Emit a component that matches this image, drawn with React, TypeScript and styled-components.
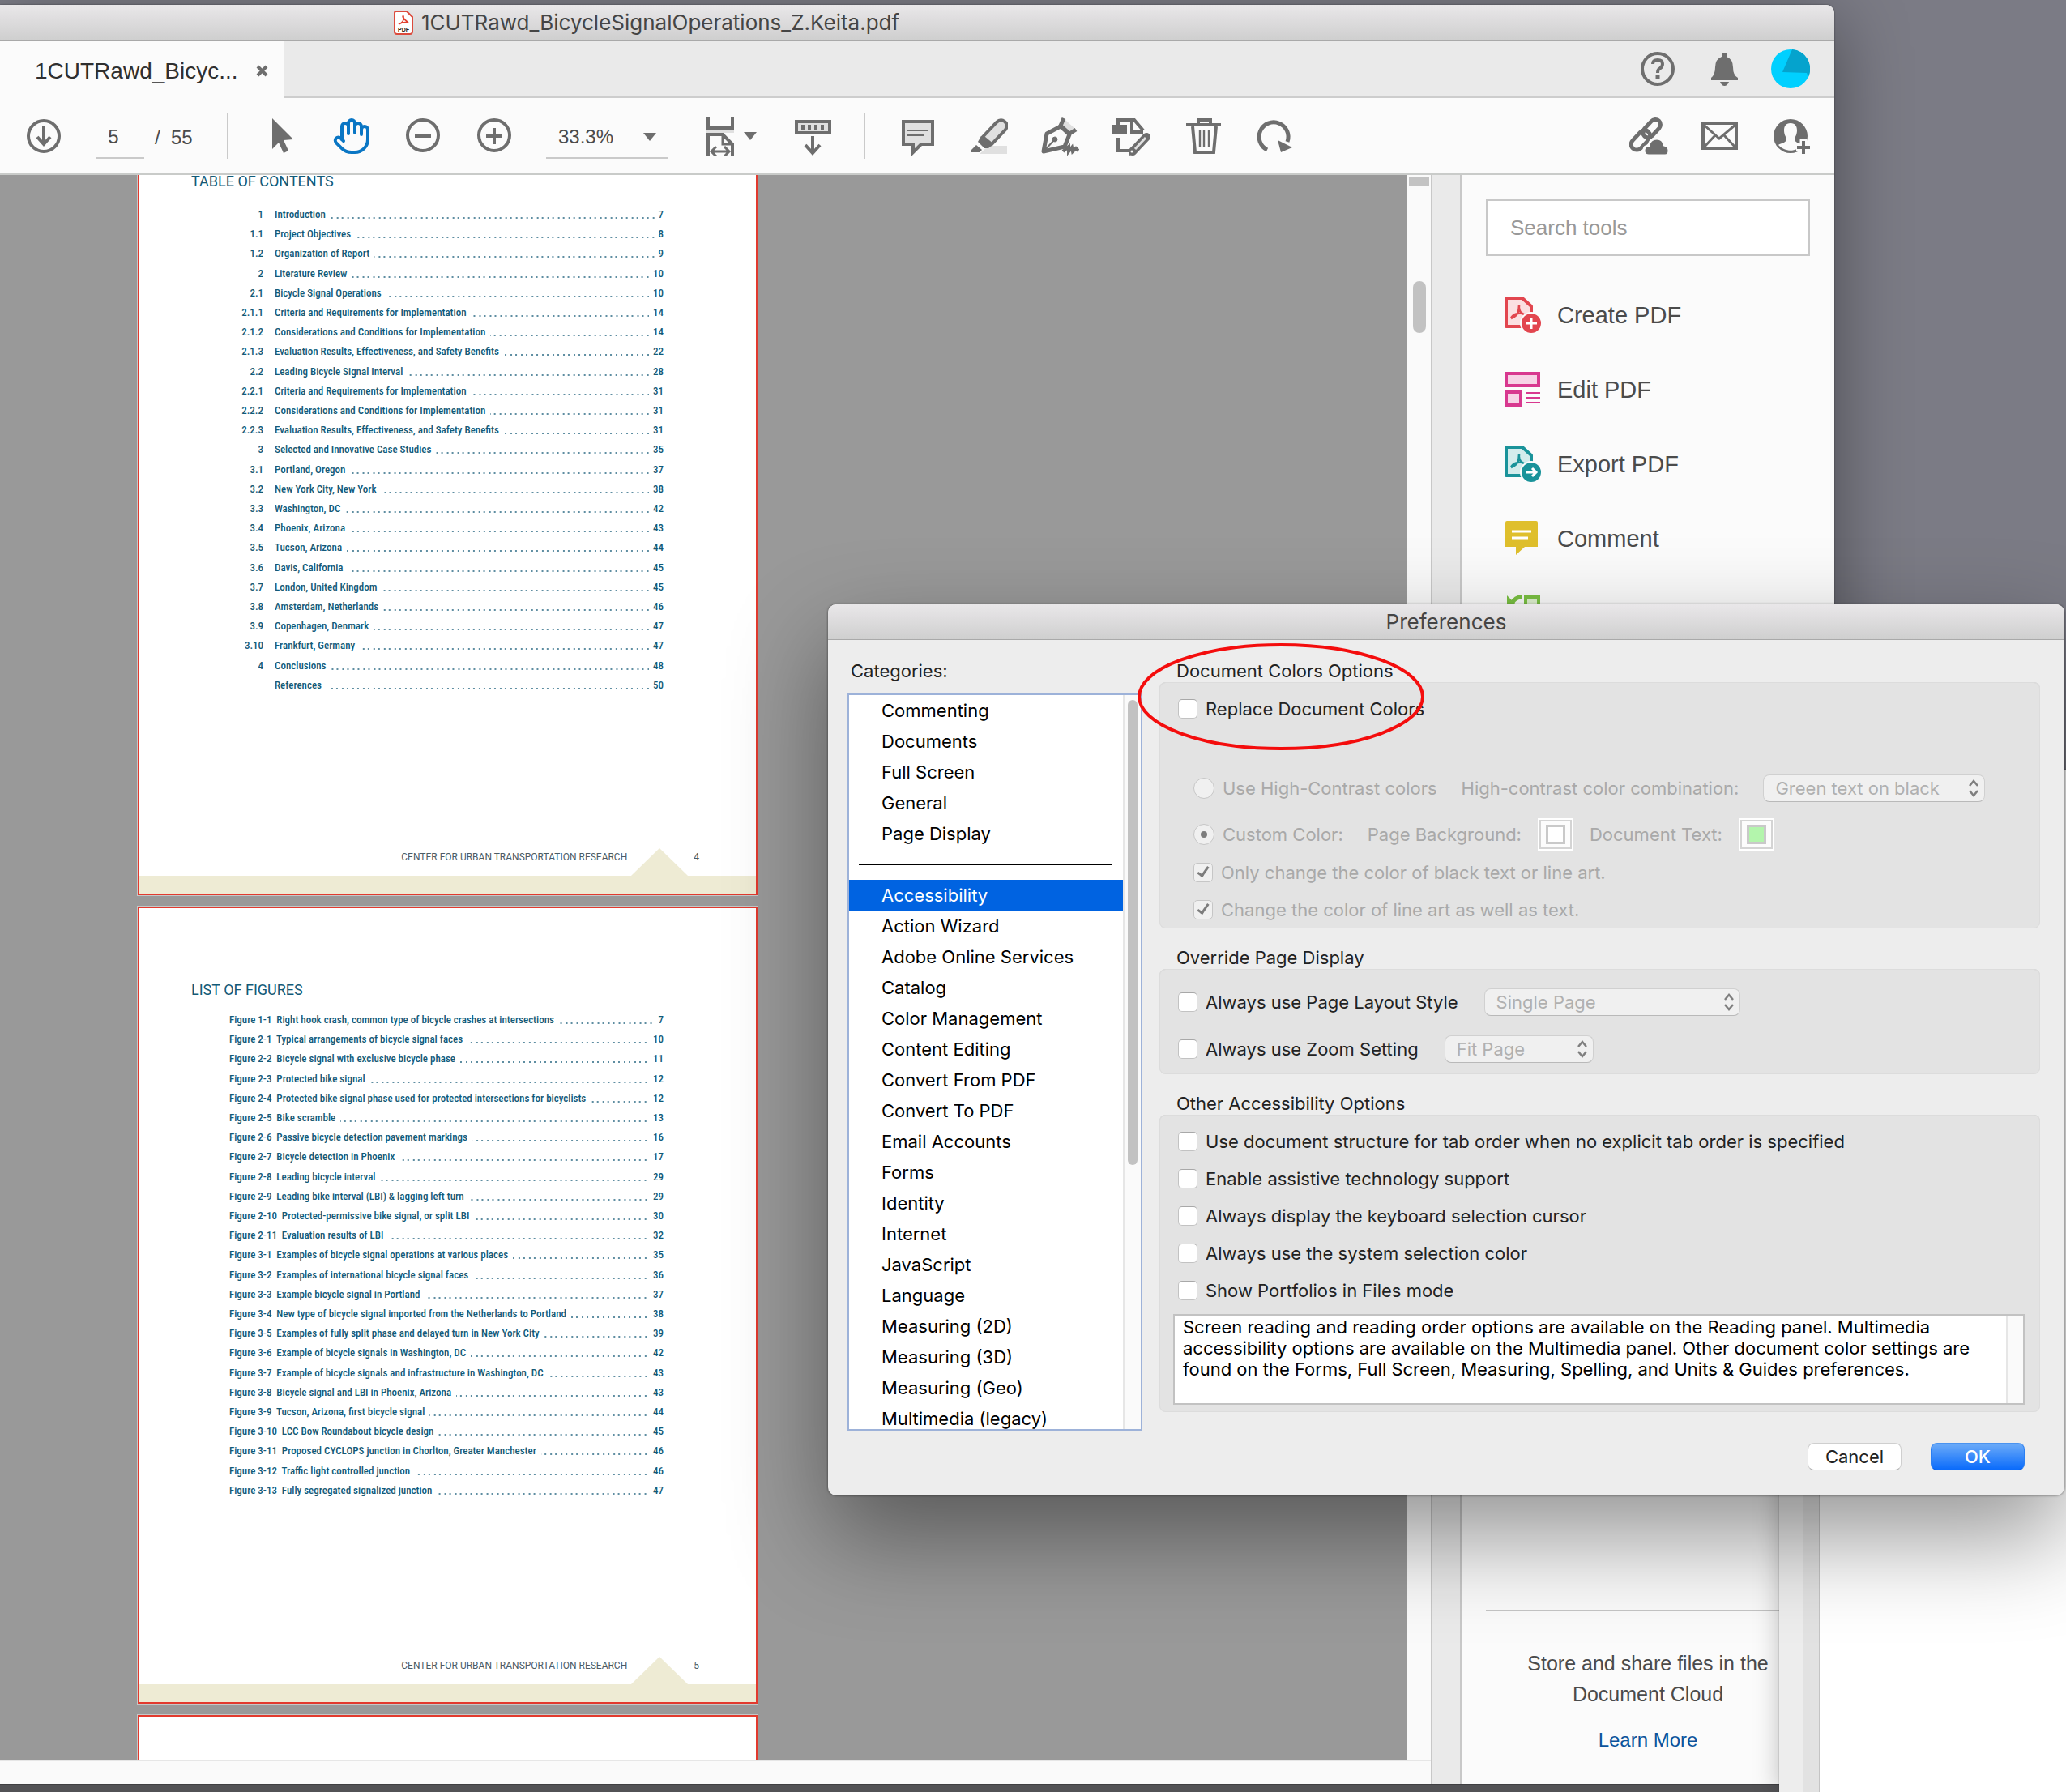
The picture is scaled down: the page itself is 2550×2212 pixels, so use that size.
import React, { useLayoutEffect, useRef } from "react";
import styled, { createGlobalStyle, css } from "styled-components";
import { Hand } from "lucide-react";

const INK = "#6e6e6e";
const PALE = "#e0e0e0";
const UI = `Inter, "Noto Sans", sans-serif`;
const HELV = `"Liberation Sans", Arial, sans-serif`;
const CONDENSED = `"Roboto Condensed", Roboto, sans-serif`;

const GlobalStyle = createGlobalStyle`
  *, *::before, *::after { box-sizing: border-box; }
  html, body { margin: 0; height: 100%; }
  #root { height: 100%; }
  button, input, select, textarea { font: inherit; color: inherit; }
`;

const Desktop = styled.div`
  position: relative;
  height: 100%;
  overflow: hidden;
  background: #7b7b85;
  font-family: ${UI};
`;

const DesktopFloor = styled.div`
  position: absolute;
  inset: auto 0 0 0;
  height: 10px;
  border-top: 1px solid #3f3f42;
  background: #525255;
`;

/* ---------- document window ---------- */

const DocumentWindow = styled.main`
  position: absolute;
  inset: 6px 286px 10px 0;
  display: flex;
  flex-direction: column;
  background: #fbfbfb;
  border-top-right-radius: 10px;
  box-shadow: 0 20px 90px rgba(0, 0, 0, 0.4), 0 0 2px rgba(0, 0, 0, 0.5);
  font-family: ${HELV};
`;

const titleBar = css`
  display: flex;
  align-items: center;
  justify-content: center;
  height: 44px;
  flex: none;
  background: linear-gradient(#e9e7e9, #cfcfcf);
  border-bottom: 1px solid #a9a9a9;
  color: #454545;
  font-family: ${UI};
  font-size: 26px;
  line-height: 32px;
`;

const WindowTitle = styled.header`
  ${titleBar}
  gap: 10px;
  padding-right: 668px;
  border-top-right-radius: 10px;
`;

const TabBar = styled.nav`
  display: flex;
  justify-content: space-between;
  height: 71px;
  flex: none;
  background: #eaeaea;
  border-bottom: 2px solid #cdcdcd;
`;

const Tab = styled.div`
  display: flex;
  align-items: center;
  gap: 22px;
  width: 351px;
  height: 71px;
  padding: 4px 0 0 43px;
  background: #fbfbfb;
  border-right: 1px solid #cdcdcd;
  color: #2f2f2f;
  font-size: 28px;
  line-height: 34px;
`;

const TabActions = styled.div`
  display: flex;
  align-items: center;
  gap: 34px;
  padding-right: 30px;
`;

const PlainButton = styled.button`
  display: flex;
  align-items: center;
  justify-content: center;
  flex: none;
  padding: 0;
  border: 0;
  background: none;
  color: ${INK};
`;

const IconButton = styled(PlainButton)`
  width: 48px;
  height: 48px;
`;

const Toolbar = styled.div`
  display: flex;
  align-items: center;
  gap: 40px;
  height: 95px;
  flex: none;
  padding: 0 29px 0 30px;
  background: #fbfbfb;
  border-bottom: 2px solid #c9cbc9;
  color: #4b4b4b;
  font-size: 24px;
`;

const PageGroup = styled.div`
  display: flex;
  align-items: center;
  gap: 13px;
  width: 122px;
  white-space: nowrap;
`;

const PageInput = styled.input`
  width: 60px;
  height: 56px;
  padding: 4px 16px 0 0;
  border: 0;
  border-bottom: 2px solid #cacaca;
  background: none;
  text-align: center;
`;

const PageTotal = styled.span`
  padding-top: 4px;
  white-space: pre;
`;

const Divider = styled.span`
  width: 2px;
  height: 56px;
  flex: none;
  background: #cacaca;
`;

const ZoomField = styled.div`
  position: relative;
  width: 150px;
  flex: none;
  & > svg {
    position: absolute;
    right: 14px;
    top: 24px;
    pointer-events: none;
  }
`;

const ZoomSelect = styled.select`
  appearance: none;
  width: 100%;
  height: 56px;
  padding: 4px 0 0 15px;
  border: 0;
  border-bottom: 2px solid #cacaca;
  border-radius: 0;
  background: none;
`;

const FitButton = styled(PlainButton)`
  gap: 6px;
  width: 74px;
  height: 48px;
  justify-content: flex-start;
`;

const ShareActions = styled.div`
  display: flex;
  gap: 40px;
  margin-left: auto;
`;

const Workspace = styled.div`
  display: flex;
  flex: 1;
  min-height: 0;
`;

const DocumentPane = styled.section`
  display: flex;
  flex-direction: column;
  flex: 1;
  min-width: 0;
`;

const ViewRow = styled.div`
  display: flex;
  flex: 1;
  min-height: 0;
`;

const Viewport = styled.div`
  display: flex;
  flex-direction: column;
  gap: 14px;
  flex: 1;
  padding-left: 170px;
  overflow: hidden;
  background: #999999;
`;

const ScrollTrack = styled.div`
  width: 30px;
  padding: 2px;
  border-left: 1px solid #e0e0e0;
  background: #fafafa;
`;

const ScrollCap = styled.div`
  height: 12px;
  background: #c3c3c3;
`;

const ScrollThumb = styled.div`
  width: 16px;
  height: 64px;
  margin: 117px 0 0 5px;
  border-radius: 8px;
  background: #c2c2c2;
`;

const StatusBar = styled.div`
  height: 30px;
  flex: none;
  border-top: 2px solid #e6e6e6;
  background: #fafafa;
`;

const Splitter = styled.div`
  width: 38px;
  flex: none;
  background: #eaeaea;
  border: solid #c8c8c8;
  border-width: 0 2px;
`;

/* ---------- PDF pages ---------- */

const Sheet = styled.article`
  position: relative;
  display: flex;
  flex-direction: column;
  width: 765px;
  height: 984px;
  flex: none;
  padding: 93px 114px 0 64px;
  background: #fff;
  border: 2px solid #e23a2e;
  outline: 1px solid #c4c8c8;
  font-family: ${CONDENSED};
  color: #125a78;
`;

const SheetTitle = styled.h2`
  margin: 0;
  font: 400 18px/16px Roboto, sans-serif;
`;

const Contents = styled.ol<{ $inset: number; $lead: number }>`
  display: flex;
  flex-direction: column;
  justify-content: space-between;
  height: 605px;
  margin: ${(p) => p.$lead}px 0 0;
  padding: 0 0 0 ${(p) => p.$inset}px;
  list-style: none;
  font-size: 13px;
  font-weight: 500;
  line-height: 24px;
`;

const Entry = styled.li`
  display: flex;
  white-space: pre;
`;

const EntryNumber = styled.span`
  width: 48px;
  margin-right: 14px;
  text-align: right;
`;

/* Two dots per 13px tile, counted from the right so that rows line up. */
const Leader = styled.span<{ $gap: number }>`
  flex: 1;
  height: 2px;
  margin: 15px ${(p) => p.$gap}px 0 6px;
  background-image: linear-gradient(90deg, transparent 4px, #5f8ea2 4px 6px, transparent 6px 11px, #5f8ea2 11px);
  background-size: 13px 2px;
  background-position: right top;
`;

const SheetFooter = styled.footer`
  position: absolute;
  inset: auto 0 0 0;
  color: #4b5c66;
  font: 400 12px/20px Roboto, sans-serif;
`;

const FooterLine = styled.div`
  display: flex;
  align-items: flex-end;
  justify-content: flex-end;
  padding-right: 70px;
  & > svg { margin: 0 7px 0 5px; display: block; }
  & > span { margin-bottom: 13px; }
`;

const FooterBand = styled.div`
  height: 22px;
  background: #eeebd4;
`;

/* ---------- tools panel ---------- */

const ToolsPanel = styled.aside`
  display: flex;
  flex-direction: column;
  width: 460px;
  flex: none;
  padding: 30px 30px 35px;
  background: #fbfbfb;
  color: #4b4b4b;
`;

const SearchInput = styled.input`
  width: 100%;
  height: 70px;
  flex: none;
  padding: 0 28px;
  border: 2px solid #c8c8c8;
  background: #fff;
  font-size: 26px;
  &::placeholder { color: #999; opacity: 1; }
`;

const ToolList = styled.div`
  display: flex;
  flex-direction: column;
  padding: 27px 0 0 22px;
`;

const ToolButton = styled(PlainButton)`
  justify-content: flex-start;
  gap: 18px;
  height: 92px;
  color: #4b4b4b;
  font-size: 29px;
`;

const CloudPromo = styled.div`
  margin-top: auto;
  padding-top: 45px;
  border-top: 2px solid #c6c6c6;
  text-align: center;
  font-size: 25px;
  line-height: 38px;
  & > p { margin: 0 40px 18px; }
`;

const LearnMore = styled.a`
  color: #0b539b;
  font-size: 24px;
  text-decoration: none;
`;

/* ---------- window peeking out from behind the dialog ---------- */

const BackWindow = styled.div`
  position: absolute;
  inset: 950px 0 0 auto;
  width: 354px;
  display: flex;
  background: #fff;
  box-shadow: 0 0 30px rgba(0, 0, 0, 0.25), 0 0 1px rgba(0, 0, 0, 0.5);
`;

const BackWindowEdge = styled.div`
  width: 50px;
  border-right: 1px solid #c4c4c4;
  background: linear-gradient(90deg, #ededed 30px, #e2e2e2 30px);
`;

/* ---------- preferences dialog ---------- */

const Dialog = styled.section`
  position: absolute;
  top: 746px;
  right: 2px;
  width: 1526px;
  background: #ededed;
  border-radius: 10px;
  box-shadow: 0 50px 120px rgba(0, 0, 0, 0.42), 0 0 3px rgba(0, 0, 0, 0.55);
  color: #222;
  font-size: 22px;
  line-height: 28px;
`;

const DialogTitle = styled.header`
  ${titleBar}
  border-radius: 10px 10px 0 0;
`;

const DialogBody = styled.div`
  display: flex;
  gap: 21px;
  padding: 24px 30px 0 24px;
`;

const CategoryColumn = styled.div`
  width: 364px;
  flex: none;
`;

const ColumnLabel = styled.div`
  padding-left: 4px;
  margin-bottom: 14px;
`;

const ListBox = styled.div`
  display: flex;
  height: 910px;
  border: 2px solid #9db2d9;
  background: #fff;
  color: #000;
  overflow: hidden;
`;

const CategoryList = styled.ul`
  flex: 1;
  margin: 0;
  padding: 0;
  list-style: none;
`;

const Category = styled.li<{ $selected?: boolean }>`
  height: 38px;
  padding-left: 40px;
  line-height: 38px;
  ${(p) =>
    p.$selected &&
    css`
      background: #0063e1;
      color: #fff;
    `}
`;

const CategoryRule = styled.li`
  height: 38px;
  padding: 18px 14px 0 12px;
  &::after {
    content: "";
    display: block;
    height: 2px;
    background: #000;
  }
`;

const ListTrack = styled.div`
  width: 22px;
  padding: 6px 0 0 4px;
  border-left: 2px solid #e6e6e6;
  background: #fafafa;
  &::after {
    content: "";
    display: block;
    width: 12px;
    height: 574px;
    border-radius: 6px;
    background: #c2c2c2;
  }
`;

const Options = styled.div`
  display: flex;
  flex-direction: column;
  gap: 22px;
  flex: 1;
`;

const Group = styled.fieldset`
  min-width: 0;
  margin: 0;
  padding: 0;
  border: 0;
  & > legend { padding: 0 0 0 21px; }
`;

const GroupBox = styled.div<{ $top?: number; $bottom?: number }>`
  padding: ${(p) => p.$top ?? 0}px 19px ${(p) => p.$bottom ?? 0}px 0;
  border-radius: 8px;
  background: #e3e3e3;
  box-shadow: inset 0 0 0 1px #dcdcdc, inset 0 1px 0 #d2d2d2;
`;

const Row = styled.div<{ $h: number; $indent?: boolean; $after?: number }>`
  display: flex;
  align-items: center;
  height: ${(p) => p.$h}px;
  margin-bottom: ${(p) => p.$after ?? 0}px;
  padding-left: ${(p) => (p.$indent ? 42 : 23)}px;
  white-space: nowrap;
`;

const Dimmed = styled.span<{ $before: number; $after: number }>`
  margin: 0 ${(p) => p.$after}px 0 ${(p) => p.$before}px;
  color: #a9a9a9;
`;

const ControlLabel = styled.label`
  display: flex;
  align-items: center;
  gap: 10px;
  &:has(input:disabled) { color: #a9a9a9; }
`;

const Check = styled.input`
  appearance: none;
  width: 24px;
  height: 24px;
  flex: none;
  margin: 0;
  border: 1px solid #c2c2c2;
  border-top-color: #a8a8a8;
  border-radius: 5px;
  background: #fff;
  &:disabled { background: #f0f0f0; border-color: #c6c6c6; }
  &:checked::after {
    content: "";
    display: block;
    width: 8px;
    height: 15px;
    margin: 1px 0 0 7px;
    border: solid #7d7d7d;
    border-width: 0 3px 3px 0;
    transform: rotate(35deg);
  }
`;

const Radio = styled.input`
  appearance: none;
  display: grid;
  place-items: center;
  width: 26px;
  height: 26px;
  flex: none;
  margin: 0;
  border: 1px solid #c6c6c6;
  border-radius: 50%;
  background: #f0f0f0;
  &:checked::after {
    content: "";
    width: 8px;
    height: 8px;
    border-radius: 50%;
    background: #7d7d7d;
  }
`;

const PopupFrame = styled.div<{ $w: number; $lead?: number }>`
  position: relative;
  width: ${(p) => p.$w}px;
  margin-left: ${(p) => p.$lead ?? 0}px;
  & > svg {
    position: absolute;
    right: 6px;
    top: 6px;
    pointer-events: none;
  }
`;

const PopupSelect = styled.select`
  appearance: none;
  display: block;
  width: 100%;
  height: 34px;
  padding: 0 14px;
  border: 1px solid #d0d0d0;
  border-bottom-color: #b9b9b9;
  border-radius: 8px;
  background: #f0f0f0;
  color: #b0b0b0;
  opacity: 1;
`;

const Swatch = styled.button<{ $color: string }>`
  display: grid;
  place-items: center;
  width: 44px;
  height: 40px;
  padding: 0;
  border: 2px solid #fff;
  background: #f7f7f7;
  box-shadow: inset 0 0 0 2px #d4d4d4, inset 0 0 0 8px #fcfcfc;
  &::after {
    content: "";
    width: 24px;
    height: 24px;
    border: 3px solid #c9c9c9;
    background: ${(p) => p.$color};
  }
`;

const Note = styled.div`
  display: flex;
  height: 112px;
  margin: 6px 0 0 17px;
  border: 2px solid #c2c2c2;
  background: #fff;
`;

const NoteText = styled.textarea`
  flex: 1;
  padding: 1px 10px 0;
  border: 0;
  background: none;
  resize: none;
  overflow: hidden;
  outline: 0;
  color: #000;
  line-height: 26px;
`;

const NoteTrack = styled.div`
  width: 21px;
  border-left: 2px solid #e6e6e6;
  background: #fafafa;
`;

const DialogFooter = styled.footer`
  display: flex;
  justify-content: flex-end;
  gap: 36px;
  padding: 15px 49px 31px;
`;

const DialogButton = styled.button<{ $primary?: boolean }>`
  width: 116px;
  height: 34px;
  padding: 0;
  border: 1px solid #cfcfcf;
  border-bottom-color: #b0b0b0;
  border-radius: 8px;
  background: #fff;
  ${(p) =>
    p.$primary &&
    css`
      border-color: #4a93f0 #2a7ff2 #0a5fe0;
      background: linear-gradient(#6cabf8, #0a6bfb);
      color: #fff;
      font-weight: 500;
    `}
`;

const Annotation = styled.svg`
  position: absolute;
  top: 48px;
  left: 382px;
  pointer-events: none;
`;

/* ---------- icons ---------- */

const Glyph = ({ children, size = 48 }: { children: React.ReactNode; size?: number }) => (
  <svg
    width={size}
    height={size}
    viewBox="0 0 48 48"
    fill="none"
    stroke="currentColor"
    strokeWidth="4"
    aria-hidden="true"
  >
    {children}
  </svg>
);

const Caret = () => (
  <svg width="16" height="10" viewBox="0 0 16 10" fill={INK} aria-hidden="true">
    <path d="M0 0h16L8 10z" />
  </svg>
);

const UpDown = () => (
  <svg width="16" height="22" viewBox="0 0 16 22" fill="none" stroke="#7f7f7f" strokeWidth="2.5" aria-hidden="true">
    <path d="M3 8l5-6 5 6M3 14l5 6 5-6" />
  </svg>
);

const PdfFileIcon = () => (
  <svg width="24" height="30" viewBox="0 0 24 30" aria-hidden="true">
    <path d="M3 1h13l7 7v18a3 3 0 0 1-3 3H4a3 3 0 0 1-3-3V3a2 2 0 0 1 2-2z" fill="#fff" stroke="#dc4a3c" strokeWidth="2" />
    <path d="M6 17c5-2 7-6 6-10-2-1-1 3 6 8-5-1-9 0-12 2z" fill="none" stroke="#e2402f" strokeWidth="1.6" />
    <text x="12" y="26" textAnchor="middle" fontFamily="Liberation Sans, sans-serif" fontWeight="700" fontSize="7" fill="#222">
      PDF
    </text>
  </svg>
);

const DownloadIcon = () => (
  <Glyph>
    <circle cx="24" cy="24" r="19" />
    <path d="M24 12v22M16 25l8 9 8-9" />
  </Glyph>
);

const CursorIcon = () => (
  <Glyph>
    <path d="M14 2l26 26-12 1 6 13-6 3-6-13-8 8z" fill="currentColor" stroke="none" />
  </Glyph>
);

const ZoomIcon = ({ plus }: { plus?: boolean }) => (
  <Glyph>
    <circle cx="24" cy="23" r="19" />
    <path d={plus ? "M14 24h20M24 14v20" : "M14 24h20"} />
  </Glyph>
);

const FitIcon = () => (
  <Glyph>
    <path d="M10 0v14h30V0" />
    <path d="M8 18h34" stroke={PALE} />
    <path d="M10 48V22h18l12 12v14" />
    <path d="M28 22v12h12" strokeWidth="3" />
    <path d="M15 43h20M20 37l-6 6 6 6M30 37l6 6-6 6" strokeWidth="3" />
  </Glyph>
);

const KeyboardIcon = () => (
  <Glyph>
    <rect x="5" y="6" width="41" height="14" fill={PALE} />
    <path d="M11 13h30" strokeDasharray="4 4" strokeWidth="6" />
    <path d="M25 24v20M16 35l9 10 9-10" />
  </Glyph>
);

const CommentIcon = () => (
  <Glyph>
    <path d="M7 6h36v28H29L19 44V34H7z" fill={PALE} />
    <path d="M12 17h25M12 23h21" strokeWidth="2" />
  </Glyph>
);

const HighlightIcon = () => (
  <Glyph>
    <path d="M13 46l11-10h23v10z" fill={PALE} stroke="none" />
    <path d="M17 25L34 7q5-5 10-1t1 10L28 34z" fill={PALE} />
    <path d="M15 24l14 11-5 4h-5l-8-8z" fill="currentColor" stroke="none" />
    <path d="M9 35l7 6-3 3H2v-2z" fill="currentColor" stroke="none" />
  </Glyph>
);

const SignIcon = () => (
  <Glyph>
    <path d="M31 4l12 11-7 6-11-10z" fill={PALE} stroke="none" />
    <path d="M29 2l-4 9 11 10 8-5" strokeWidth="5" />
    <path d="M4 43l4-22 17-9 11 10-6 15z" strokeWidth="5" strokeLinejoin="round" />
    <path d="M5 42l12-13" strokeWidth="2" />
    <circle cx="18" cy="28" r="3" fill="currentColor" strokeWidth="1" />
    <path d="M28 43l7-6v6l4-5 1 5 4-4 3 3" strokeWidth="4" />
  </Glyph>
);

const EditPageIcon = () => (
  <Glyph>
    <path d="M1 10h18v12H1z" fill="currentColor" stroke="none" />
    <path d="M8 10V4h20l11 13M25 4v15h14M8 26v16h14" strokeWidth="4" />
    <path d="M26 43L43 25" strokeWidth="10" strokeLinecap="round" />
    <path d="M22 48l1-10 8 7z" fill="currentColor" stroke="none" />
    <path d="M29 40L42 26" stroke={PALE} strokeWidth="3" />
    <circle cx="25" cy="43" r="1.5" fill="#fbfbfb" stroke="none" />
  </Glyph>
);

const TrashIcon = () => (
  <Glyph>
    <path d="M4 10h43M19 9V4h15v5" />
    <path d="M12 12l3 32h23l3-32" />
    <path d="M21 17v20M26 17v20M32 17v20" strokeWidth="2.4" />
  </Glyph>
);

const RotateIcon = () => (
  <Glyph>
    <path d="M16 41A18 18 0 1 1 41 31" strokeWidth="5" />
    <path d="M29 29l18 9-14 6z" fill="currentColor" stroke="none" />
  </Glyph>
);

const LinkCloudIcon = () => (
  <Glyph>
    <rect x="15" y="8" width="26" height="13" rx="7" transform="rotate(-47 28 15)" strokeWidth="5" />
    <rect x="0" y="22" width="28" height="14" rx="7" transform="rotate(-47 14 29)" strokeWidth="5" />
    <path
      d="M24 48q-6 0-6-6t6-6q1-9 10-9 8 0 9 8 6 1 6 7t-5 6z"
      fill="currentColor"
      stroke="#fbfbfb"
      strokeWidth="3"
    />
  </Glyph>
);

const MailIcon = () => (
  <Glyph>
    <rect x="3" y="8" width="41" height="31" />
    <path d="M4 10l19 17L43 10M4 38l14-15M43 38L29 23" strokeWidth="3" />
  </Glyph>
);

const AddUserIcon = () => (
  <Glyph>
    <circle cx="23" cy="24" r="21" fill="currentColor" stroke="none" />
    <path
      d="M23 8c6 0 8 4 8 9 0 6-3 8-3 12 2 4 8 4 10 6-8 9-22 9-30 0 2-2 8-2 10-6 0-4-3-6-3-12 0-5 2-9 8-9z"
      fill="#fbfbfb"
      stroke="none"
    />
    <path d="M39 28v20M30 38h18" stroke="#fbfbfb" strokeWidth="9" />
    <path d="M39 30v16M31 38h16" />
  </Glyph>
);

const HelpIcon = () => (
  <Glyph>
    <circle cx="24" cy="24" r="19" />
    <path d="M18 18q0-5 6-5t6 5q0 4-4 6-2 1-2 5" />
    <path d="M24 32v5" strokeWidth="5" />
  </Glyph>
);

const BellIcon = () => (
  <Glyph>
    <path
      d="M21 5h6v4q8 3 8 13 0 10 6 13v3H8v-3q5-4 5-13 0-10 8-13zM19 40h11q-2 5-5.5 5T19 40z"
      fill="currentColor"
      stroke="none"
    />
  </Glyph>
);

const AvatarIcon = () => (
  <Glyph>
    <circle cx="24" cy="24" r="24" fill="#00d0ff" stroke="none" />
    <path d="M26 0a24 24 0 0 1 20 34l-2-5-30-1z" fill="#05a3cd" stroke="none" />
  </Glyph>
);

const AcrobatPage = ({ tint, fill, mark }: { tint: string; fill: string; mark: string }) => (
  <Glyph>
    <g stroke={tint}>
      <path d="M3 3h20l11 10v25H3z" fill={fill} strokeLinejoin="round" />
      <path d="M9 28c8-3 10-8 10-16M9 28c2-5 8-7 15-6M19 15c0 4 3 7 6 8" strokeWidth="2.6" />
    </g>
    <circle cx="34" cy="34" r="13" fill={tint} stroke="#fbfbfb" strokeWidth="2" />
    <path d={mark} stroke="#fff" strokeWidth="3" />
  </Glyph>
);

const EditPdfIcon = () => (
  <Glyph>
    <g stroke="#d8388f">
      <path d="M3 4h40v15H3zM3 27h18v16H3z" fill="#f7d3e6" />
      <path d="M28 28h17M28 34h17M28 40h17" strokeWidth="2" />
    </g>
  </Glyph>
);

const CommentToolIcon = () => (
  <Glyph>
    <path d="M4 2h36q2 0 2 2v30H26L15 44V34H2V4q0-2 2-2z" fill="#dfbf2c" stroke="none" />
    <path d="M10 15h24M10 23h20" stroke="#fff" strokeWidth="3" />
  </Glyph>
);

const OrganizeIcon = () => (
  <Glyph>
    <g stroke="#7bc143">
      <path d="M27 4h16v14H27zM26 26h17v16H26zM5 26h14v16H5z" fill="#dff1cf" />
      <path d="M22 4q-8 0-12 8" strokeWidth="5" />
      <path d="M4 2v14h14z" fill="#7bc143" stroke="none" />
    </g>
  </Glyph>
);

/* ---------- data ---------- */

const tocEntries: [string, string, string][] = [
  ["1", "Introduction", "7"],
  ["1.1", "Project Objectives", "8"],
  ["1.2", "Organization of Report", "9"],
  ["2", "Literature Review", "10"],
  ["2.1", "Bicycle Signal Operations", "10"],
  ["2.1.1", "Criteria and Requirements for Implementation", "14"],
  ["2.1.2", "Considerations and Conditions for Implementation", "14"],
  ["2.1.3", "Evaluation Results, Effectiveness, and Safety Benefits", "22"],
  ["2.2", "Leading Bicycle Signal Interval", "28"],
  ["2.2.1", "Criteria and Requirements for Implementation", "31"],
  ["2.2.2", "Considerations and Conditions for Implementation", "31"],
  ["2.2.3", "Evaluation Results, Effectiveness, and Safety Benefits", "31"],
  ["3", "Selected and Innovative Case Studies", "35"],
  ["3.1", "Portland, Oregon", "37"],
  ["3.2", "New York City, New York", "38"],
  ["3.3", "Washington, DC", "42"],
  ["3.4", "Phoenix, Arizona", "43"],
  ["3.5", "Tucson, Arizona", "44"],
  ["3.6", "Davis, California", "45"],
  ["3.7", "London, United Kingdom", "45"],
  ["3.8", "Amsterdam, Netherlands", "46"],
  ["3.9", "Copenhagen, Denmark", "47"],
  ["3.10", "Frankfurt, Germany", "47"],
  ["4", "Conclusions", "48"],
  ["", "References", "50"],
];

const figureEntries: [string, string, string][] = [
  ["1-1", "Right hook crash, common type of bicycle crashes at intersections", "7"],
  ["2-1", "Typical arrangements of bicycle signal faces", "10"],
  ["2-2", "Bicycle signal with exclusive bicycle phase", "11"],
  ["2-3", "Protected bike signal", "12"],
  ["2-4", "Protected bike signal phase used for protected intersections for bicyclists", "12"],
  ["2-5", "Bike scramble", "13"],
  ["2-6", "Passive bicycle detection pavement markings", "16"],
  ["2-7", "Bicycle detection in Phoenix", "17"],
  ["2-8", "Leading bicycle interval", "29"],
  ["2-9", "Leading bike interval (LBI) & lagging left turn", "29"],
  ["2-10", "Protected-permissive bike signal, or split LBI", "30"],
  ["2-11", "Evaluation results of LBI", "32"],
  ["3-1", "Examples of bicycle signal operations at various places", "35"],
  ["3-2", "Examples of international bicycle signal faces", "36"],
  ["3-3", "Example bicycle signal in Portland", "37"],
  ["3-4", "New type of bicycle signal imported from the Netherlands to Portland", "38"],
  ["3-5", "Examples of fully split phase and delayed turn in New York City", "39"],
  ["3-6", "Example of bicycle signals in Washington, DC", "42"],
  ["3-7", "Example of bicycle signals and infrastructure in Washington, DC", "43"],
  ["3-8", "Bicycle signal and LBI in Phoenix, Arizona", "43"],
  ["3-9", "Tucson, Arizona, first bicycle signal", "44"],
  ["3-10", "LCC Bow Roundabout bicycle design", "45"],
  ["3-11", "Proposed CYCLOPS junction in Chorlton, Greater Manchester", "46"],
  ["3-12", "Traffic light controlled junction", "46"],
  ["3-13", "Fully segregated signalized junction", "47"],
];

const generalCategories = ["Commenting", "Documents", "Full Screen", "General", "Page Display"];

const categories = [
  "Accessibility",
  "Action Wizard",
  "Adobe Online Services",
  "Catalog",
  "Color Management",
  "Content Editing",
  "Convert From PDF",
  "Convert To PDF",
  "Email Accounts",
  "Forms",
  "Identity",
  "Internet",
  "JavaScript",
  "Language",
  "Measuring (2D)",
  "Measuring (3D)",
  "Measuring (Geo)",
  "Multimedia (legacy)",
];

const accessibilityOptions = [
  "Use document structure for tab order when no explicit tab order is specified",
  "Enable assistive technology support",
  "Always display the keyboard selection cursor",
  "Always use the system selection color",
  "Show Portfolios in Files mode",
];

const tools = [
  {
    name: "Create PDF",
    icon: <AcrobatPage tint="#e2464f" fill="#fbdfe1" mark="M34 27v14M27 34h14" />,
  },
  { name: "Edit PDF", icon: <EditPdfIcon /> },
  {
    name: "Export PDF",
    icon: <AcrobatPage tint="#1a939a" fill="#d3ecec" mark="M27 34h12M35 29l5 5-5 5" />,
  },
  { name: "Comment", icon: <CommentToolIcon /> },
  { name: "Organize Pages", icon: <OrganizeIcon /> },
];

const reviewTools = [
  { name: "Add comment", icon: <CommentIcon /> },
  { name: "Highlight text", icon: <HighlightIcon /> },
  { name: "Sign", icon: <SignIcon /> },
  { name: "Edit page", icon: <EditPageIcon /> },
  { name: "Delete", icon: <TrashIcon /> },
  { name: "Rotate", icon: <RotateIcon /> },
];

/* ---------- parts ---------- */

const PageFooter = ({ page }: { page: number }) => (
  <SheetFooter>
    <FooterLine>
      <span>CENTER FOR URBAN TRANSPORTATION RESEARCH</span>
      <svg width="70" height="34" viewBox="0 0 70 34" aria-hidden="true">
        <path d="M35 0l35 34H0z" fill="#eeebd4" />
      </svg>
      <span>{page}</span>
    </FooterLine>
    <FooterBand />
  </SheetFooter>
);

const CheckRow = ({ label, h, indent, checked, disabled, after, children }: {
  label: string;
  h: number;
  indent?: boolean;
  checked?: boolean;
  disabled?: boolean;
  after?: number;
  children?: React.ReactNode;
}) => (
  <Row $h={h} $indent={indent} $after={after}>
    <ControlLabel>
      <Check type="checkbox" defaultChecked={checked} disabled={disabled} />
      {label}
    </ControlLabel>
    {children}
  </Row>
);

const Popup = ({ label, value, width, lead }: { label: string; value: string; width: number; lead?: number }) => (
  <PopupFrame $w={width} $lead={lead}>
    <PopupSelect aria-label={label} disabled defaultValue={value}>
      <option>{value}</option>
    </PopupSelect>
    <UpDown />
  </PopupFrame>
);

const Pages = () => {
  const view = useRef<HTMLDivElement>(null);
  useLayoutEffect(() => {
    if (view.current) view.current.scrollTop = 95;
  }, []);
  return (
    <Viewport ref={view}>
      <Sheet>
        <SheetTitle>TABLE OF CONTENTS</SheetTitle>
        <Contents $inset={41} $lead={21}>
          {tocEntries.map(([num, title, page]) => (
            <Entry key={num + title}>
              <EntryNumber>{num}</EntryNumber>
              <span>{title}</span>
              <Leader $gap={5} />
              <span>{page}</span>
            </Entry>
          ))}
        </Contents>
        <PageFooter page={4} />
      </Sheet>
      <Sheet>
        <SheetTitle>LIST OF FIGURES</SheetTitle>
        <Contents $inset={47} $lead={17}>
          {figureEntries.map(([num, title, page]) => (
            <Entry key={num}>
              <span>{`Figure ${num}  ${title}`}</span>
              <Leader $gap={8} />
              <span>{page}</span>
            </Entry>
          ))}
        </Contents>
        <PageFooter page={5} />
      </Sheet>
      <Sheet />
    </Viewport>
  );
};

const MainWindow = () => (
  <DocumentWindow>
    <WindowTitle>
      <PdfFileIcon />
      1CUTRawd_BicycleSignalOperations_Z.Keita.pdf
    </WindowTitle>
    <TabBar>
      <Tab>
        1CUTRawd_Bicyc...
        <PlainButton aria-label="Close tab">
          <svg width="15" height="15" viewBox="0 0 15 15" stroke={INK} strokeWidth="4" aria-hidden="true">
            <path d="M2 2l11 11M13 2L2 13" />
          </svg>
        </PlainButton>
      </Tab>
      <TabActions>
        <IconButton aria-label="Help"><HelpIcon /></IconButton>
        <IconButton aria-label="Notifications"><BellIcon /></IconButton>
        <IconButton aria-label="Account"><AvatarIcon /></IconButton>
      </TabActions>
    </TabBar>
    <Toolbar>
      <IconButton aria-label="Next page"><DownloadIcon /></IconButton>
      <PageGroup>
        <PageInput aria-label="Page number" defaultValue="5" />
        <PageTotal>/  55</PageTotal>
      </PageGroup>
      <Divider />
      <IconButton aria-label="Select"><CursorIcon /></IconButton>
      <IconButton aria-label="Pan"><Hand size={52} color="#0a76c4" strokeWidth={2} /></IconButton>
      <IconButton aria-label="Zoom out"><ZoomIcon /></IconButton>
      <IconButton aria-label="Zoom in"><ZoomIcon plus /></IconButton>
      <ZoomField>
        <ZoomSelect aria-label="Zoom level" defaultValue="33.3%">
          <option>33.3%</option>
        </ZoomSelect>
        <Caret />
      </ZoomField>
      <FitButton aria-label="Fit page">
        <FitIcon />
        <Caret />
      </FitButton>
      <IconButton aria-label="Read mode"><KeyboardIcon /></IconButton>
      <Divider />
      {reviewTools.map((t) => (
        <IconButton key={t.name} aria-label={t.name}>{t.icon}</IconButton>
      ))}
      <ShareActions>
        <IconButton aria-label="Share link"><LinkCloudIcon /></IconButton>
        <IconButton aria-label="Send by email"><MailIcon /></IconButton>
        <IconButton aria-label="Add people"><AddUserIcon /></IconButton>
      </ShareActions>
    </Toolbar>
    <Workspace>
      <DocumentPane>
        <ViewRow>
          <Pages />
          <ScrollTrack>
            <ScrollCap />
            <ScrollThumb />
          </ScrollTrack>
        </ViewRow>
        <StatusBar />
      </DocumentPane>
      <Splitter />
      <ToolsPanel>
        <SearchInput type="search" aria-label="Search tools" placeholder="Search tools" />
        <ToolList>
          {tools.map((t) => (
            <ToolButton key={t.name}>
              {t.icon}
              {t.name}
            </ToolButton>
          ))}
        </ToolList>
        <CloudPromo>
          <p>Store and share files in the Document Cloud</p>
          <LearnMore href="#learn-more">Learn More</LearnMore>
        </CloudPromo>
      </ToolsPanel>
    </Workspace>
  </DocumentWindow>
);

const Preferences = () => (
  <Dialog role="dialog" aria-label="Preferences">
    <DialogTitle>Preferences</DialogTitle>
    <DialogBody>
      <CategoryColumn>
        <ColumnLabel>Categories:</ColumnLabel>
        <ListBox>
          <CategoryList>
            {generalCategories.map((c) => (
              <Category key={c}>{c}</Category>
            ))}
            <CategoryRule />
            {categories.map((c) => (
              <Category key={c} $selected={c === "Accessibility"}>{c}</Category>
            ))}
          </CategoryList>
          <ListTrack />
        </ListBox>
      </CategoryColumn>
      <Options>
        <Group>
          <legend>Document Colors Options</legend>
          <GroupBox>
            <CheckRow label="Replace Document Colors" h={66} after={32} />
            <Row $h={66} $indent>
              <ControlLabel>
                <Radio type="radio" name="scheme" disabled />
                Use High-Contrast colors
              </ControlLabel>
              <Dimmed $before={30} $after={30}>High-contrast color combination:</Dimmed>
              <Popup label="High-contrast color combination" value="Green text on black" width={274} />
            </Row>
            <Row $h={48} $indent>
              <ControlLabel>
                <Radio type="radio" name="scheme" defaultChecked disabled />
                Custom Color:
              </ControlLabel>
              <Dimmed $before={30} $after={20}>Page Background:</Dimmed>
              <Swatch $color="#ffffff" aria-label="Page background color" disabled />
              <Dimmed $before={20} $after={20}>Document Text:</Dimmed>
              <Swatch $color="#b3f5ac" aria-label="Document text color" disabled />
            </Row>
            <CheckRow label="Only change the color of black text or line art." h={46} indent checked disabled />
            <CheckRow label="Change the color of line art as well as text." h={46} indent checked disabled />
          </GroupBox>
        </Group>
        <Group>
          <legend>Override Page Display</legend>
          <GroupBox $top={12} $bottom={2}>
            <CheckRow label="Always use Page Layout Style" h={58}>
              <Popup label="Page layout style" value="Single Page" width={316} lead={32} />
            </CheckRow>
            <CheckRow label="Always use Zoom Setting" h={58}>
              <Popup label="Zoom setting" value="Fit Page" width={184} lead={32} />
            </CheckRow>
          </GroupBox>
        </Group>
        <Group>
          <legend>Other Accessibility Options</legend>
          <GroupBox $top={10} $bottom={9}>
            {accessibilityOptions.map((o) => (
              <CheckRow key={o} label={o} h={46} />
            ))}
            <Note>
              <NoteText
                readOnly
                aria-label="About accessibility options"
                defaultValue="Screen reading and reading order options are available on the Reading panel. Multimedia accessibility options are available on the Multimedia panel. Other document color settings are found on the Forms, Full Screen, Measuring, Spelling, and Units & Guides preferences."
              />
              <NoteTrack />
            </Note>
          </GroupBox>
        </Group>
      </Options>
    </DialogBody>
    <DialogFooter>
      <DialogButton>Cancel</DialogButton>
      <DialogButton $primary>OK</DialogButton>
    </DialogFooter>
    <Annotation width="354" height="132" viewBox="0 0 354 132" aria-hidden="true">
      <ellipse cx="177" cy="66" rx="175" ry="64" fill="none" stroke="#f40d0d" strokeWidth="4" />
    </Annotation>
  </Dialog>
);

export default function App() {
  return (
    <>
      <GlobalStyle />
      <Desktop>
        <MainWindow />
        <DesktopFloor />
        <BackWindow>
          <BackWindowEdge />
        </BackWindow>
        <Preferences />
      </Desktop>
    </>
  );
}
